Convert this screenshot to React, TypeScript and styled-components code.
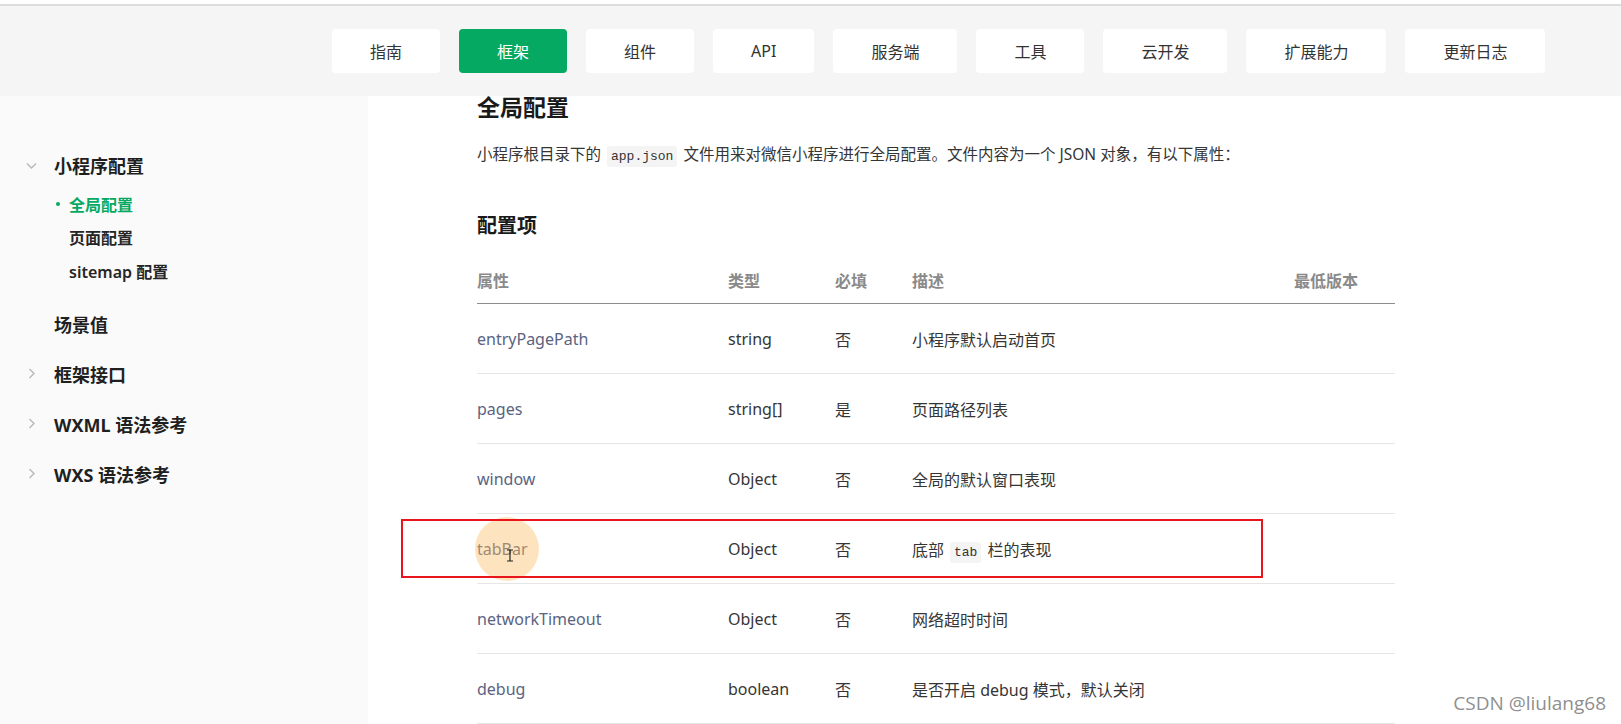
import React from "react";
import styled, { createGlobalStyle, css } from "styled-components";

const GREEN = "#06a962";
const SANS = `"Noto Sans", "Noto Sans CJK SC", sans-serif`;
const MONO = `"Liberation Mono", "DejaVu Sans Mono", monospace`;

const GlobalStyle = createGlobalStyle`
  html, body { margin: 0; padding: 0; background: #ffffff; }
  body { font-family: ${SANS}; overflow: hidden; }
  * { box-sizing: border-box; }
`;

const Page = styled.div`
  width: 1621px;
  height: 724px;
  overflow: hidden;
  display: flex;
  flex-direction: column;
  background: #fff;
  position: relative;
`;

const Header = styled.header`
  margin-top: 4px;
  border-top: 2px solid #dddddd;
  background: #f5f5f5;
  height: 92px;
  display: flex;
  align-items: center;
  flex-shrink: 0;
`;

const Nav = styled.nav`
  margin-left: 332px;
  display: flex;
  gap: 19px;
`;

const NavButton = styled.a<{ $active?: boolean }>`
  height: 44px;
  padding: 0 38px;
  display: flex;
  align-items: center;
  justify-content: center;
  border-radius: 4px;
  font-size: 16px;
  color: #333;
  background: #fff;
  text-decoration: none;
  white-space: nowrap;
  ${(p) =>
    p.$active &&
    css`
      background: ${GREEN};
      color: #fff;
    `}
`;

const Body = styled.div`
  flex: 1;
  display: grid;
  grid-template-columns: 368px 1fr;
  min-height: 0;
`;

const Sidebar = styled.aside`
  background: #fafafa;
  padding-top: 46px;
  display: flex;
  flex-direction: column;
`;

const SideItem = styled.div<{ $h?: number }>`
  height: ${(p) => p.$h ?? 50}px;
  display: flex;
  align-items: center;
  padding-left: 16px;
  font-size: 18px;
  font-weight: 700;
  color: #1f1f1f;
  white-space: nowrap;
`;

const Caret = styled.span`
  width: 30px;
  margin-right: 8px;
  display: flex;
  justify-content: center;
  align-items: center;
  color: #b8b8b8;
`;

const SubList = styled.div`
  display: flex;
  flex-direction: column;
  margin-top: -1px;
  margin-bottom: 11px;
`;

const SubItem = styled.div<{ $active?: boolean }>`
  height: 33.5px;
  display: flex;
  align-items: center;
  padding-left: 54px;
  font-size: 16px;
  color: ${(p) => (p.$active ? GREEN : "#262626")};
  font-weight: ${(p) => (p.$active ? 700 : 600)};
`;

const Bullet = styled.span<{ $show?: boolean }>`
  width: 15px;
  display: flex;
  align-items: center;
  &::before {
    content: "";
    display: ${(p) => (p.$show ? "block" : "none")};
    width: 4px;
    height: 4px;
    margin-left: 2px;
    border-radius: 50%;
    background: ${GREEN};
  }
`;

const Main = styled.main`
  padding-left: 109px;
  display: flex;
  flex-direction: column;
`;

const Title = styled.h1`
  margin: 0;
  font-size: 23px;
  line-height: 22px;
  font-weight: 700;
  color: #1a1a1a;
`;

const Para = styled.p`
  margin: 23px 0 0;
  font-size: 15.5px;
  line-height: 26px;
  color: #353535;
`;

const Code = styled.code`
  font-family: ${MONO};
  font-size: 13px;
  background: #f4f4f4;
  border-radius: 3px;
  padding: 3px 4px;
  margin: 0 6px;
  color: #333;
`;

const SubTitle = styled.h2`
  margin: 43px 0 0;
  font-size: 20px;
  line-height: 26px;
  font-weight: 700;
  color: #1a1a1a;
`;

const Table = styled.div`
  margin-top: 18px;
  width: 918px;
  display: flex;
  flex-direction: column;
`;

const cols = "251px 107px 77px 382px 101px";

const HeadRow = styled.div`
  display: grid;
  grid-template-columns: ${cols};
  height: 47px;
  align-items: center;
  border-bottom: 1px solid #8c8c8c;
  font-size: 16px;
  font-weight: 600;
  color: #8a8a8a;
`;

const Row = styled.div`
  position: relative;
  display: grid;
  grid-template-columns: ${cols};
  height: 70px;
  align-items: center;
  border-bottom: 1px solid #e6e6e6;
  font-size: 16px;
  color: #353535;
`;

const Prop = styled.span`
  color: #5b6382;
`;

const Highlight = styled.div`
  position: absolute;
  left: -76px;
  top: 5px;
  width: 862px;
  height: 59px;
  border: 2px solid #e8151c;
  pointer-events: none;
`;

const CursorHalo = styled.div`
  position: absolute;
  left: -2px;
  top: 3px;
  width: 64px;
  height: 64px;
  border-radius: 50%;
  background: rgba(252, 190, 100, 0.42);
  pointer-events: none;
`;

const CursorMark = styled.svg`
  position: absolute;
  left: 29px;
  top: 35px;
  pointer-events: none;
`;

const Watermark = styled.div`
  position: absolute;
  right: 15px;
  bottom: 8px;
  font-family: "Open Sans", ${SANS};
  font-size: 19px;
  color: #8f8f8f;
  text-shadow: 0 0 2px #fff, 0 0 2px #fff;
`;

const ChevronDown = () => (
  <svg width="13" height="13" viewBox="0 0 13 13" fill="none">
    <path d="M2 4.5 L6.5 9 L11 4.5" stroke="currentColor" strokeWidth="1.4" />
  </svg>
);

const ChevronRight = () => (
  <svg width="13" height="13" viewBox="0 0 13 13" fill="none">
    <path d="M4.5 2 L9 6.5 L4.5 11" stroke="currentColor" strokeWidth="1.4" />
  </svg>
);

const navItems = ["指南", "框架", "组件", "API", "服务端", "工具", "云开发", "扩展能力", "更新日志"];

type RowData = { name: string; type: string; req: string; desc: React.ReactNode; mark?: boolean };

const rows: RowData[] = [
  { name: "entryPagePath", type: "string", req: "否", desc: "小程序默认启动首页" },
  { name: "pages", type: "string[]", req: "是", desc: "页面路径列表" },
  { name: "window", type: "Object", req: "否", desc: "全局的默认窗口表现" },
  {
    name: "tabBar",
    type: "Object",
    req: "否",
    desc: (
      <>
        底部<Code>tab</Code>栏的表现
      </>
    ),
    mark: true,
  },
  { name: "networkTimeout", type: "Object", req: "否", desc: "网络超时时间" },
  { name: "debug", type: "boolean", req: "否", desc: "是否开启 debug 模式，默认关闭" },
];

export default function App() {
  return (
    <>
      <GlobalStyle />
      <Page>
        <Header>
          <Nav>
            {navItems.map((n) => (
              <NavButton key={n} $active={n === "框架"}>
                {n}
              </NavButton>
            ))}
          </Nav>
        </Header>
        <Body>
          <Sidebar>
            <SideItem $h={46}>
              <Caret>
                <ChevronDown />
              </Caret>
              小程序配置
            </SideItem>
            <SubList>
              <SubItem $active>
                <Bullet $show />
                全局配置
              </SubItem>
              <SubItem>
                <Bullet />
                页面配置
              </SubItem>
              <SubItem>
                <Bullet />
                sitemap 配置
              </SubItem>
            </SubList>
            <SideItem>
              <Caret />
              场景值
            </SideItem>
            <SideItem>
              <Caret>
                <ChevronRight />
              </Caret>
              框架接口
            </SideItem>
            <SideItem>
              <Caret>
                <ChevronRight />
              </Caret>
              WXML 语法参考
            </SideItem>
            <SideItem>
              <Caret>
                <ChevronRight />
              </Caret>
              WXS 语法参考
            </SideItem>
          </Sidebar>
          <Main>
            <Title>全局配置</Title>
            <Para>
              小程序根目录下的<Code>app.json</Code>文件用来对微信小程序进行全局配置。文件内容为一个 JSON 对象，有以下属性：
            </Para>
            <SubTitle>配置项</SubTitle>
            <Table>
              <HeadRow>
                <span>属性</span>
                <span>类型</span>
                <span>必填</span>
                <span>描述</span>
                <span>最低版本</span>
              </HeadRow>
              {rows.map((r) => (
                <Row key={r.name}>
                  <Prop>{r.name}</Prop>
                  <span>{r.type}</span>
                  <span>{r.req}</span>
                  <span>{r.desc}</span>
                  <span />
                  {r.mark && (
                    <>
                      <CursorHalo />
                      <CursorMark width="8" height="13" viewBox="0 0 8 13">
                        <path d="M1 1 H7 M4 1 V12 M1 12 H7" stroke="#222" strokeWidth="1.2" fill="none" />
                      </CursorMark>
                      <Highlight />
                    </>
                  )}
                </Row>
              ))}
            </Table>
          </Main>
        </Body>
        <Watermark>CSDN @liulang68</Watermark>
      </Page>
    </>
  );
}
